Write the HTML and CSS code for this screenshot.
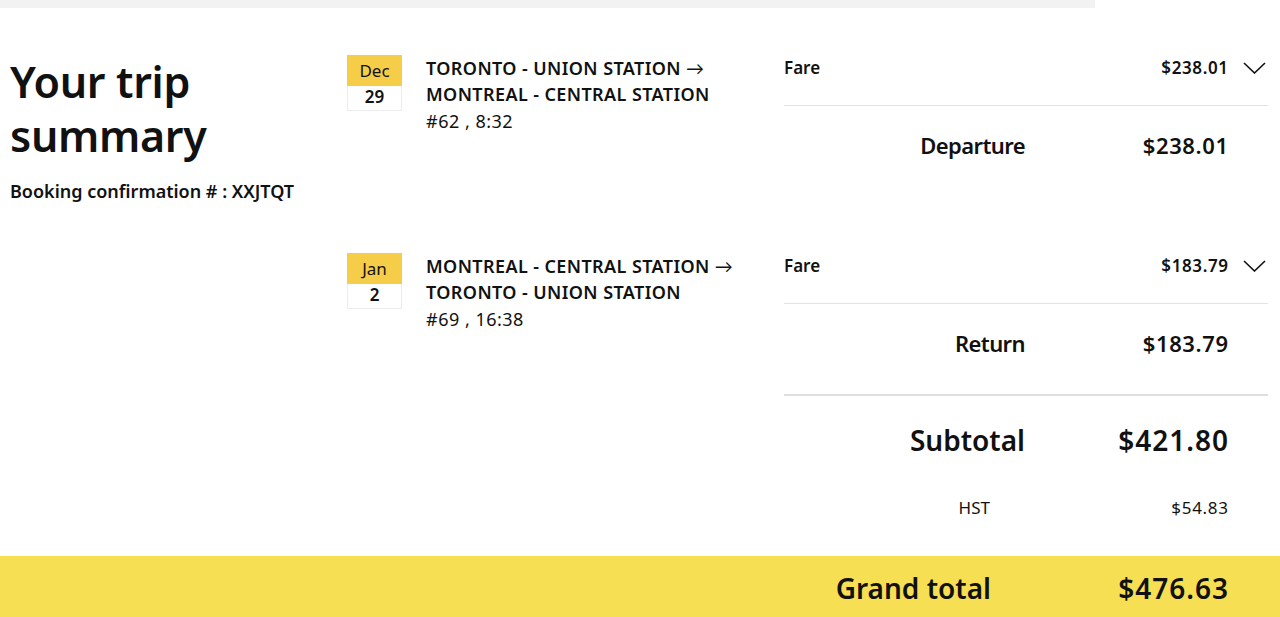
FILE: index.html
```html
<!DOCTYPE html>
<html lang="en">
<head>
<meta charset="utf-8">
<title>Your trip summary</title>
<link rel="stylesheet" href="styles.css">
</head>
<body>
<div class="topbar"></div>
<main class="summary">
  <section class="intro">
    <h1 class="title">Your trip summary</h1>
    <p class="booking">Booking confirmation # : XXJTQT</p>
  </section>
  <div class="trips">
    <div class="trip">
      <div class="trip-info">
        <div class="date">
          <div class="date-month">Dec</div>
          <div class="date-day">29</div>
        </div>
        <div class="route">
          <div class="route-line">TORONTO - UNION STATION <span class="arrow">→</span></div>
          <div class="route-line">MONTREAL - CENTRAL STATION</div>
          <div class="route-meta">#62 , 8:32</div>
        </div>
      </div>
      <div class="fare">
        <div class="fare-row">
          <span class="fare-label">Fare</span>
          <span class="fare-value">$238.01</span>
          <span class="chevron"><svg width="23" height="12" viewBox="0 0 23 12"><path d="M1 1 L11.5 11 L22 1" fill="none" stroke="#111" stroke-width="1.6"/></svg></span>
        </div>
        <div class="line-row">
          <span class="line-label">Departure</span>
          <span class="line-value">$238.01</span>
        </div>
      </div>
    </div>
    <div class="trip">
      <div class="trip-info">
        <div class="date">
          <div class="date-month">Jan</div>
          <div class="date-day">2</div>
        </div>
        <div class="route">
          <div class="route-line">MONTREAL - CENTRAL STATION <span class="arrow">→</span></div>
          <div class="route-line">TORONTO - UNION STATION</div>
          <div class="route-meta">#69 , 16:38</div>
        </div>
      </div>
      <div class="fare">
        <div class="fare-row">
          <span class="fare-label">Fare</span>
          <span class="fare-value">$183.79</span>
          <span class="chevron"><svg width="23" height="12" viewBox="0 0 23 12"><path d="M1 1 L11.5 11 L22 1" fill="none" stroke="#111" stroke-width="1.6"/></svg></span>
        </div>
        <div class="line-row">
          <span class="line-label">Return</span>
          <span class="line-value">$183.79</span>
        </div>
      </div>
    </div>
    <div class="totals">
      <div class="subtotal-row">
        <span class="subtotal-label">Subtotal</span>
        <span class="subtotal-value">$421.80</span>
      </div>
      <div class="tax-row">
        <span class="tax-label">HST</span>
        <span class="tax-value">$54.83</span>
      </div>
    </div>
  </div>
</main>
<div class="grand">
  <span class="grand-label">Grand total</span>
  <span class="grand-value">$476.63</span>
</div>
</body>
</html>
```

FILE: styles.css
```css
* { box-sizing: border-box; }
html, body { margin: 0; padding: 0; }
body {
  font-family: "Noto Sans", "Lato", sans-serif;
  color: #111;
  background: #fff;
  overflow: hidden;
}
.topbar {
  width: 1095px;
  height: 8px;
  background: #f2f2f2;
}
.summary {
  display: flex;
  padding: 40px 12px 0 10px;
}
.intro {
  width: 337px;
  flex: none;
}
.title {
  margin: 7px 0 0;
  font-size: 43px;
  line-height: 54px;
  font-weight: 600;
  width: 260px;
  letter-spacing: -0.3px;
}
.booking {
  margin: 16px 0 0;
  font-size: 18px;
  font-weight: 600;
  line-height: 24px;
}
.trips {
  flex: 1;
  display: flex;
  flex-direction: column;
}
.trip {
  display: flex;
}
.trip + .trip { margin-top: 50px; }
.trip-info {
  width: 437px;
  flex: none;
  display: flex;
  gap: 24px;
  padding-top: 7px;
}
.date {
  width: 55px;
  height: 56px;
  border: 1px solid #ececec;
  flex: none;
  text-align: center;
}
.date-month {
  background: #f6cd48;
  height: 31px;
  margin: -1px -1px 0;
  line-height: 31px;
  font-size: 17px;
  font-weight: 400;
}
.date-day {
  line-height: 22px;
  font-size: 17px;
  font-weight: 600;
}
.route {
  font-size: 18px;
  line-height: 26px;
}
.route-line {
  font-weight: 600;
  letter-spacing: 0.4px;
}
.arrow { font-weight: 400; }
.route-meta {
  font-weight: 400;
  line-height: 28px;
  letter-spacing: 0.5px;
}
.fare { flex: 1; }
.fare-row {
  display: flex;
  align-items: center;
  padding: 8px 0 25px;
  line-height: 24px;
  font-size: 17px;
  font-weight: 600;
  border-bottom: 1px solid #e3e3e3;
}
.fare-label { flex: 1; }
.fare-value { letter-spacing: 0.6px; margin-right: -0.6px; }
.chevron {
  width: 40px;
  display: flex;
  justify-content: flex-end;
  padding-right: 2px;
}
.chevron svg { display: block; }
.line-row, .subtotal-row, .tax-row {
  display: grid;
  grid-template-columns: 1fr 203px 40px;
  text-align: right;
}
.line-row {
  padding: 24px 0 36px;
  font-size: 22px;
  line-height: 30px;
  font-weight: 600;
}
.line-label { letter-spacing: -0.6px; }
.line-value { letter-spacing: 0.6px; margin-right: -0.6px; }
.totals {
  margin-left: 437px;
  border-top: 2px solid #dedede;
}
.subtotal-row {
  padding-top: 26px;
  font-size: 28px;
  line-height: 36px;
  font-weight: 600;
}
.subtotal-value { letter-spacing: 1px; margin-right: -1px; }
.tax-row {
  grid-template-columns: 1fr 238px 40px;
  padding: 38px 0 36px;
  font-size: 17px;
  line-height: 24px;
  font-weight: 400;
}
.tax-value { letter-spacing: 0.7px; margin-right: -0.7px; }
.grand {
  background: #f6df52;
  display: flex;
  justify-content: flex-end;
  padding: 14px 52px 20px 0;
  font-size: 28px;
  line-height: 36px;
  font-weight: 600;
}
.grand-value {
  width: 238px;
  text-align: right;
  letter-spacing: 1px;
  margin-right: -1px;
}
```
